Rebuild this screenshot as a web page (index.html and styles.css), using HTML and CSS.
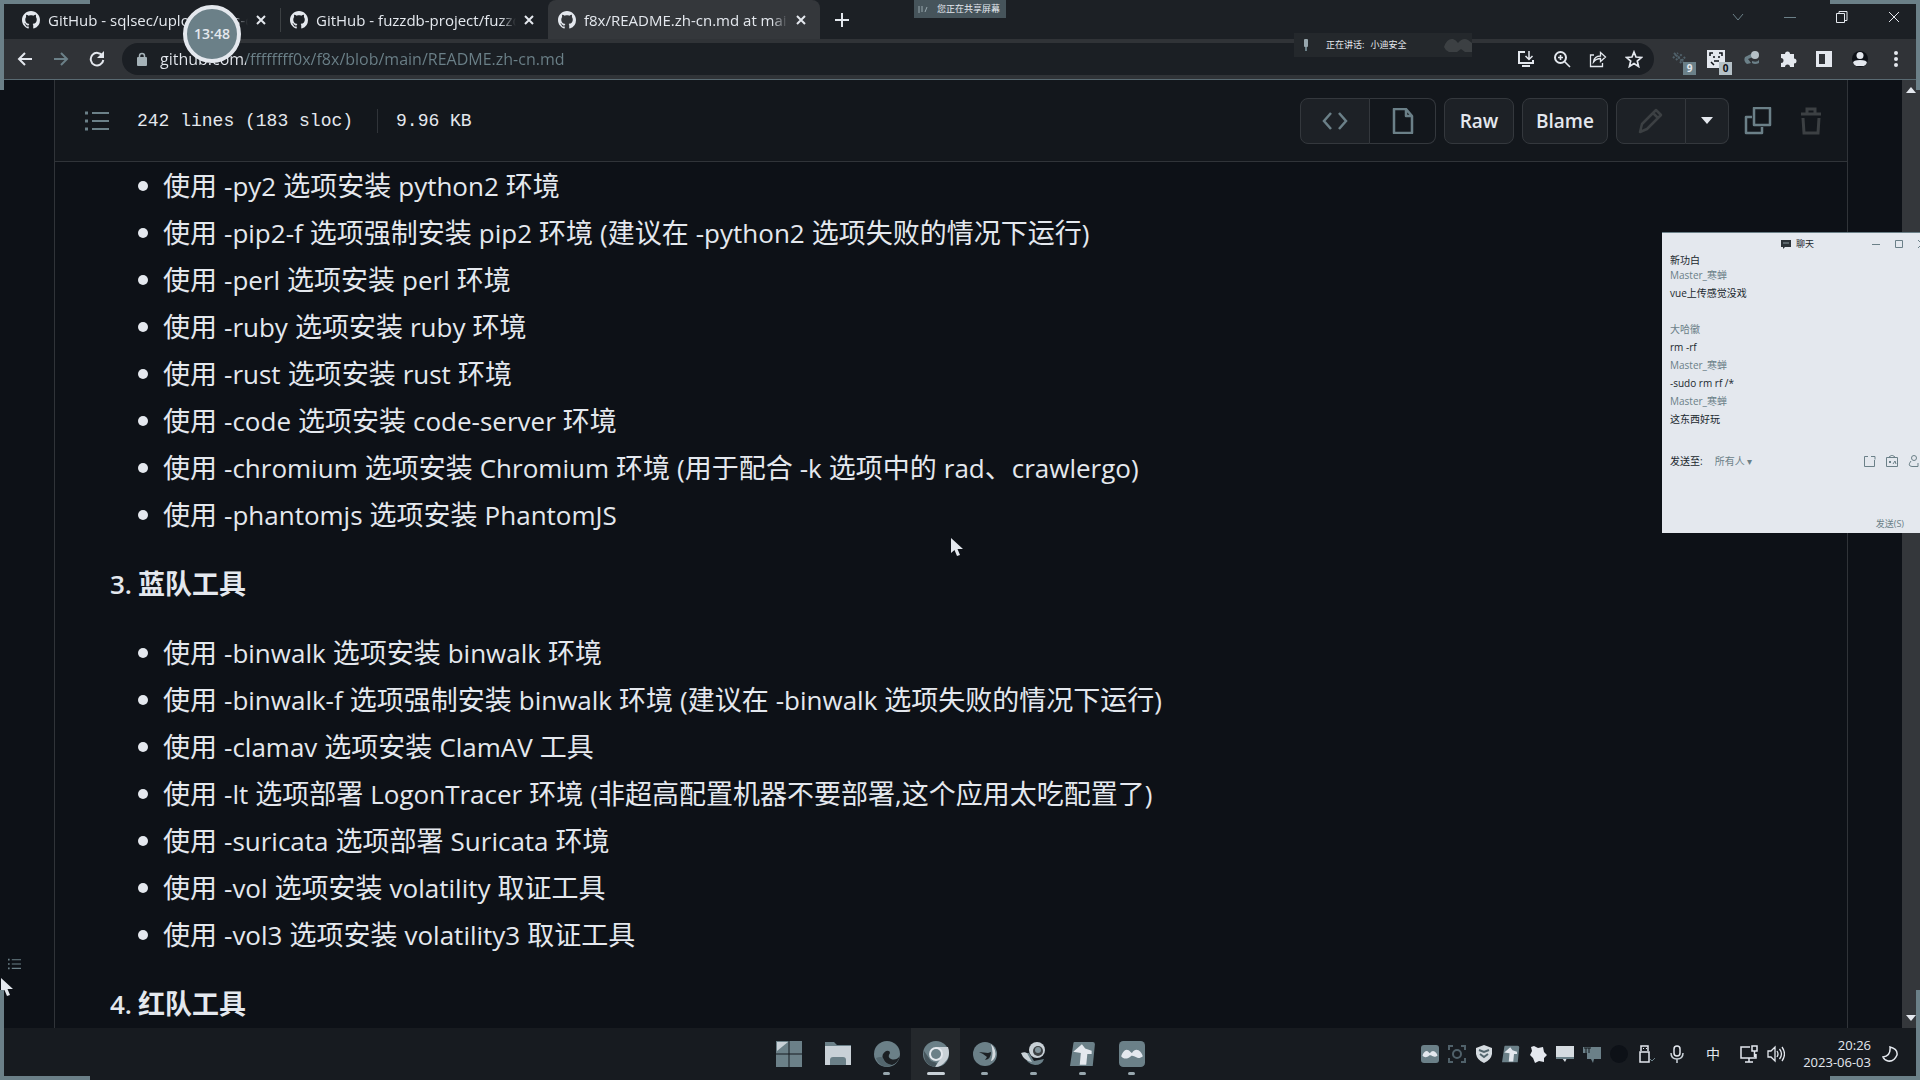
FILE: index.html
```html
<!DOCTYPE html>
<html lang="zh-CN">
<head>
<meta charset="utf-8">
<title>f8x/README.zh-cn.md at main</title>
<link rel="stylesheet" href="styles.css">
</head>
<body>
<svg class="sprite" aria-hidden="true">
  <symbol id="github" viewBox="0 0 16 16"><path fill="currentColor" d="M8 0C3.58 0 0 3.58 0 8c0 3.54 2.29 6.53 5.47 7.59.4.07.55-.17.55-.38 0-.19-.01-.82-.01-1.49-2.01.37-2.53-.49-2.69-.94-.09-.23-.48-.94-.82-1.13-.28-.15-.68-.52-.01-.53.63-.01 1.08.58 1.23.82.72 1.21 1.87.87 2.33.66.07-.52.28-.87.51-1.07-1.78-.2-3.64-.89-3.64-3.95 0-.87.31-1.59.82-2.15-.08-.2-.36-1.02.08-2.12 0 0 .67-.21 2.2.82.64-.18 1.32-.27 2-.27s1.36.09 2 .27c1.53-1.04 2.2-.82 2.2-.82.44 1.1.16 1.92.08 2.12.51.56.82 1.27.82 2.15 0 3.07-1.87 3.75-3.65 3.95.29.25.54.73.54 1.48 0 1.07-.01 1.93-.01 2.2 0 .21.15.46.55.38A8.01 8.01 0 0 0 16 8c0-4.42-3.58-8-8-8z"/></symbol>
  <symbol id="x" viewBox="0 0 10 10"><path d="M1 1l8 8M9 1l-8 8" stroke="currentColor" stroke-width="2" fill="none"/></symbol>
  <symbol id="list" viewBox="0 0 24 20"><path d="M7 2h17M7 10h17M7 18h17" stroke="currentColor" stroke-width="2"/><path d="M0 2h3M0 10h3M0 18h3" stroke="currentColor" stroke-width="3"/></symbol>
  <symbol id="pointer" viewBox="0 0 12 18"><path fill="#e4e8ee" d="M0 0v15l3.500-3 2.500 6 3-1-2.500-6H12z"/></symbol>
  <symbol id="wave" viewBox="0 0 24 24"><rect width="24" height="24" rx="4" fill="#6b8088"/><path d="M2 14c1-3 3-6 5-6 3 0 4 3 5 3 1-2 3-3 4-3 3 0 5 3 6 6-2 2-5 2-6 1-2-1-4-2-5-1-3 3-7 3-9 0z" fill="#e4e8ee"/></symbol>
  <symbol id="bird" viewBox="0 0 24 24"><path d="M4 1h17q2 0 2 2l-2 20H0L3 3q0-2 1-2z" fill="#6b8088"/><path d="M3 10l8-7 3 4 6 2v3h-4l-1 10H9l1-11z" fill="#e4e8ee"/></symbol>
</svg>

<header class="tabstrip">
  <nav class="tabs" aria-label="标签页">
    <div class="tab"><svg class="i18"><use href="#github"/></svg><span class="tab-title">GitHub - sqlsec/upload-labs-d</span><button class="bare" aria-label="关闭"><svg class="i10"><use href="#x"/></svg></button></div>
    <div class="tab divided"><svg class="i18"><use href="#github"/></svg><span class="tab-title">GitHub - fuzzdb-project/fuzzd</span><button class="bare" aria-label="关闭"><svg class="i10"><use href="#x"/></svg></button></div>
    <div class="tab active"><svg class="i18"><use href="#github"/></svg><span class="tab-title">f8x/README.zh-cn.md at main</span><button class="bare" aria-label="关闭"><svg class="i10"><use href="#x"/></svg></button></div>
    <button class="bare new-tab" aria-label="新标签页"><svg class="i14" viewBox="0 0 14 14"><path d="M7 0v14M0 7h14" stroke="currentColor" stroke-width="2"/></svg></button>
  </nav>
  <div class="window-buttons">
    <button class="bare dim" aria-label="搜索标签页"><svg class="i14" viewBox="0 0 14 14"><path d="M2 4l5 6 5-6" fill="none" stroke="currentColor"/></svg></button>
    <button class="bare dim" aria-label="最小化"><svg class="i14" viewBox="0 0 14 14"><path d="M1 7.500h12" stroke="currentColor"/></svg></button>
    <button class="bare" aria-label="还原"><svg class="i14" viewBox="0 0 14 14"><path d="M1.500 3.500h8v9h-8zM4 3.500V1.500h8v9H9.500" fill="none" stroke="currentColor"/></svg></button>
    <button class="bare" aria-label="关闭窗口"><svg class="i14" viewBox="0 0 14 14"><path d="M2 2l10 10M12 2L2 12" stroke="currentColor"/></svg></button>
  </div>
</header>

<div class="toolbar">
  <div class="nav-buttons">
    <button class="bare" aria-label="后退"><svg class="i16" viewBox="0 0 16 16"><path d="M15 8H2M8 2L2 8l6 6" fill="none" stroke="currentColor" stroke-width="2"/></svg></button>
    <button class="bare dim" aria-label="前进"><svg class="i16" viewBox="0 0 16 16"><path d="M1 8h13M8 2l6 6-6 6" fill="none" stroke="currentColor" stroke-width="2"/></svg></button>
    <button class="bare" aria-label="刷新"><svg class="i16" viewBox="0 0 16 16"><path d="M13.500 5A6.300 6.300 0 1 0 14.300 9" fill="none" stroke="currentColor" stroke-width="2"/><path d="M15 0v7H8z" fill="currentColor"/></svg></button>
  </div>
  <div class="omnibox">
    <svg class="lock" viewBox="0 0 10 14"><path d="M2.500 6V4a2.500 2.500 0 0 1 5 0v2" fill="none" stroke="currentColor" stroke-width="1.500"/><rect y="5" width="10" height="9" rx="1" fill="currentColor"/></svg>
    <input class="url" aria-label="地址" value="github.com/ffffffff0x/f8x/blob/main/README.zh-cn.md">
    <button class="bare" aria-label="安装"><svg class="i18" viewBox="0 0 18 18"><path d="M8 2H2v11h14v-3M5 16h8" fill="none" stroke="currentColor" stroke-width="2"/><path d="M12 1v8M8.500 6l3.500 3.500L15.500 6" fill="none" stroke="currentColor" stroke-width="1.500"/></svg></button>
    <button class="bare" aria-label="缩放"><svg class="i18" viewBox="0 0 18 18"><circle cx="7.500" cy="7.500" r="5.500" fill="none" stroke="currentColor" stroke-width="2"/><path d="M11.500 11.500L17 17M5 7.500h5M7.500 5v5" stroke="currentColor" stroke-width="1.600"/></svg></button>
    <button class="bare" aria-label="分享"><svg class="i18" viewBox="0 0 18 18"><path d="M5 5H1.500v11.500h12V13M4.500 12c.5-4 3-6 7-6V2.500L16.500 7l-5 4.500V8.500c-3 0-5 1-7 3.500z" fill="none" stroke="currentColor" stroke-width="1.300"/></svg></button>
    <button class="bare" aria-label="收藏"><svg class="i18" viewBox="0 0 18 18"><path d="M9 2l2 5 5.500.5-4.200 3.500 1.300 5.500L9 13.500l-4.600 3L5.700 11 1.500 7.500 7 7z" fill="none" stroke="currentColor" stroke-width="1.700"/></svg></button>
  </div>
  <div class="extensions">
    <button class="bare ext" aria-label="扩展 9"><svg class="i18" viewBox="0 0 18 18"><path d="M2 8l5-5M5 10l6-6M9 13l5-6M3 3l9 9" stroke="#50616a" stroke-width="2" stroke-dasharray="2 1"/></svg><span class="badge">9</span></button>
    <button class="bare ext" aria-label="扩展 0"><svg class="i18" viewBox="0 0 18 18"><rect width="18" height="18" fill="#e4e8ee"/><path d="M3 6V3h3M12 3h3v3M4 12l3 3M6 7h2M11 7h2M7 11h5" fill="none" stroke="#0d1117" stroke-width="1.500"/></svg><span class="badge light">0</span></button>
    <button class="bare" aria-label="扩展"><svg class="i18" viewBox="0 0 18 18"><path d="M8 4L2 7q-2 4 2 7l4-1-3-4 5-2" fill="#6b8088"/><circle cx="12" cy="5" r="4" fill="#b5c0c6"/><path d="M9 11q5 2 7-1v3q-4 2-7 0z" fill="#6b8088"/></svg></button>
    <button class="bare" aria-label="扩展程序"><svg class="i18" viewBox="0 0 18 18"><path fill="currentColor" d="M6 4a2.500 2.500 0 0 1 5 0h4v4.500a2.500 2.500 0 0 1 0 5V17h-4a2.500 2.500 0 0 0-5 0H2v-4a2.500 2.500 0 0 0 0-5V4z"/></svg></button>
    <button class="bare" aria-label="侧边栏"><svg class="i18" viewBox="0 0 18 18"><path fill="currentColor" fill-rule="evenodd" d="M1 1h16v16H1zM4 4v10h6V4z"/></svg></button>
    <button class="bare avatar" aria-label="用户"><svg class="i16" viewBox="0 0 16 16"><circle cx="8" cy="4.500" r="3.500" fill="currentColor"/><path d="M1 15v-3q0-3 7-3t7 3v3z" fill="currentColor"/></svg></button>
    <button class="bare" aria-label="菜单"><svg class="i18" viewBox="0 0 18 18"><circle cx="9" cy="3" r="2" fill="currentColor"/><circle cx="9" cy="9" r="2" fill="currentColor"/><circle cx="9" cy="15" r="2" fill="currentColor"/></svg></button>
  </div>
</div>

<div class="viewport">
  <aside class="gutter"><svg class="outline-icon"><use href="#list"/></svg></aside>
  <main class="file">
    <div class="file-header">
      <svg class="toc"><use href="#list"/></svg>
      <span class="meta">242 lines (183 sloc)</span><span class="meta size">9.96 KB</span>
      <div class="actions">
        <div class="group">
          <button class="btn on" aria-label="源代码"><svg class="i26" viewBox="0 0 26 26"><path d="M9 5L2 13l7 8M17 5l7 8-7 8" fill="none" stroke="currentColor" stroke-width="2.500"/></svg></button>
          <button class="btn flat" aria-label="预览"><svg class="i26" viewBox="0 0 26 26"><path d="M4 1h12l6 7v17H4zM16 1v7h6" fill="none" stroke="currentColor" stroke-width="2.500" stroke-linejoin="round"/></svg></button>
        </div>
        <button class="btn text">Raw</button>
        <button class="btn text blame">Blame</button>
        <div class="group">
          <button class="btn faint" aria-label="编辑"><svg class="i26" viewBox="0 0 26 26"><path d="M2 24l2-8L18 2l5 5L9 21zM15 5l5 5" fill="none" stroke="currentColor" stroke-width="2.500" stroke-linejoin="round"/></svg></button>
          <button class="btn caret" aria-label="更多"><svg class="i12" viewBox="0 0 12 12"><path d="M0 2h12L6 9z" fill="currentColor"/></svg></button>
        </div>
        <button class="bare copy" aria-label="复制"><svg class="i28" viewBox="0 0 28 28"><path d="M10 1h16v17H10zM8 10H2v16h16v-6" fill="none" stroke="currentColor" stroke-width="2.500" stroke-linejoin="round"/></svg></button>
        <button class="bare trash" aria-label="删除"><svg class="i28" viewBox="0 0 28 28"><path d="M4 7h20M10 7V2h8v5M6 11l1 15h14l1-15" fill="none" stroke="currentColor" stroke-width="3"/></svg></button>
      </div>
    </div>
    <article class="readme">
      <ul>
        <li>使用 <span>-py2</span> 选项安装 <span>python2</span> 环境</li>
        <li>使用 <span>-pip2-f</span> 选项强制安装 <span>pip2</span> 环境 <span>(</span>建议在 <span>-python2</span> 选项失败的情况下运行<span>)</span></li>
        <li>使用 <span>-perl</span> 选项安装 <span>perl</span> 环境</li>
        <li>使用 <span>-ruby</span> 选项安装 <span>ruby</span> 环境</li>
        <li>使用 <span>-rust</span> 选项安装 <span>rust</span> 环境</li>
        <li>使用 <span>-code</span> 选项安装 <span>code-server</span> 环境</li>
        <li>使用 <span>-chromium</span> 选项安装 <span>Chromium</span> 环境 <span>(</span>用于配合 <span>-k</span> 选项中的 <span>rad</span>、<span>crawlergo)</span></li>
        <li>使用 <span>-phantomjs</span> 选项安装 <span>PhantomJS</span></li>
      </ul>
      <h3><span class="num">3.</span>蓝队工具</h3>
      <ul>
        <li>使用 <span>-binwalk</span> 选项安装 <span>binwalk</span> 环境</li>
        <li>使用 <span>-binwalk-f</span> 选项强制安装 <span>binwalk</span> 环境 <span>(</span>建议在 <span>-binwalk</span> 选项失败的情况下运行<span>)</span></li>
        <li>使用 <span>-clamav</span> 选项安装 <span>ClamAV</span> 工具</li>
        <li>使用 <span>-lt</span> 选项部署 <span>LogonTracer</span> 环境 <span>(</span>非超高配置机器不要部署<span>,</span>这个应用太吃配置了<span>)</span></li>
        <li>使用 <span>-suricata</span> 选项部署 <span>Suricata</span> 环境</li>
        <li>使用 <span>-vol</span> 选项安装 <span>volatility</span> 取证工具</li>
        <li>使用 <span>-vol3</span> 选项安装 <span>volatility3</span> 取证工具</li>
      </ul>
      <h3><span class="num">4.</span>红队工具</h3>
    </article>
  </main>
  <div class="scrollbar"><svg class="i10" viewBox="0 0 10 10"><path d="M0 8l5-6 5 6z" fill="currentColor"/></svg><svg class="i10" viewBox="0 0 10 10"><path d="M0 2l5 6 5-6z" fill="currentColor"/></svg></div>
</div>

<footer class="taskbar">
  <div class="apps">
    <button class="app" aria-label="开始"><svg class="i26" viewBox="0 0 26 26"><path d="M0 0h12.500v12.500H0zM13.500 0H26v12.500H13.500zM0 13.500h12.500V26H0zM13.500 13.500H26V26H13.500z" fill="#6b8088"/><path d="M1 1h11L1 10z" fill="#c9d1d7"/></svg></button>
    <button class="app" aria-label="文件资源管理器"><svg class="i26" viewBox="0 0 26 26"><path d="M0 1h9l3 3h14v10H0z" fill="#6b8088"/><path d="M0 5h26v19H0z" fill="#c9d1d7"/><path d="M5 24v-5q0-3 3-3h10q3 0 3 3v5z" fill="#6b8088"/></svg></button>
    <button class="app open" aria-label="Edge"><svg class="i26" viewBox="0 0 26 26"><circle cx="13" cy="13" r="13" fill="#6b8088"/><path d="M26 15q-4 5-9 3-4-2-1-6 0-3-4-2-5 3-3 8 3 6 9 6 6-2 8-9z" fill="#1c2024"/><path d="M2 17q7-3 8 2 2 4 8 5-4 3-9 1-5-2-7-8z" fill="#53666e"/></svg></button>
    <button class="app open current" aria-label="Chrome"><svg class="i26" viewBox="0 0 26 26"><circle cx="13" cy="13" r="13" fill="#6b8088"/><path d="M13 6h12q3 9-3 15-4 5-10 5l6-9z" fill="#c9d1d7"/><path d="M1 10l7 10 6 2-2 4Q0 24 1 10z" fill="#46555c"/><circle cx="13" cy="13" r="7" fill="#e4e8ee"/><circle cx="13" cy="13" r="5" fill="#6b8088"/></svg></button>
    <button class="app open" aria-label="浏览器"><svg class="i26" viewBox="0 0 26 26"><circle cx="13" cy="13" r="12" fill="#6b8088"/><path d="M19 3q6 6 4 13-2 4-4 4 3-8 0-17z" fill="#d5dbe0"/><path d="M7 11l9 1 3-1q0 7-6 8l2-3-4-3z" fill="#1c2024"/></svg></button>
    <button class="app open" aria-label="工具"><svg class="i26" viewBox="0 0 26 26"><path d="M2 12h6l5 8 10-2q-2 6-9 6Q5 23 2 12z" fill="#6b8088"/><path d="M0 12q6-2 7 2l4 7Q3 20 0 12z" fill="#c9d1d7"/><circle cx="16" cy="9" r="8" fill="#c9d1d7"/><circle cx="17" cy="10" r="5" fill="#3c4043"/><circle cx="17" cy="9" r="3" fill="#82949c"/></svg></button>
    <button class="app open" aria-label="Typora"><svg class="i26"><use href="#bird"/></svg></button>
    <button class="app open" aria-label="腾讯会议"><svg class="i26"><use href="#wave"/></svg></button>
  </div>
  <div class="tray">
    <svg class="i18" viewBox="0 0 24 24"><use href="#wave"/></svg>
    <svg class="i18 dim" viewBox="0 0 18 18"><path d="M1 5V1h4M13 1h4v4M17 13v4h-4M5 17H1v-4" fill="none" stroke="#50616a" stroke-width="2"/><circle cx="9" cy="9" r="4" fill="none" stroke="#50616a" stroke-width="2"/></svg>
    <svg class="i18" viewBox="0 0 18 18"><path d="M9 0l8 3v6q-1 6-8 9-7-3-8-9V3z" fill="#d5dbe0"/><path d="M4 5l5 2 5-2M5 9l4 3 4-3" fill="none" stroke="#53666e" stroke-width="2"/></svg>
    <svg class="i18" viewBox="0 0 24 24"><use href="#bird"/></svg>
    <svg class="i18" viewBox="0 0 18 18"><path d="M5 1l4 2 5-1 1 5 3 3-3 3v4l-5-1-4 2-2-5-3-3 2-4-1-4z" fill="#e4e8ee"/></svg>
    <svg class="i18" viewBox="0 0 18 18"><path d="M0 1h18v12H11l-2 4-3-4H0z" fill="#d5dbe0"/><path d="M0 13h18" stroke="#6b8088" stroke-width="2"/></svg>
    <svg class="i18" viewBox="0 0 18 18"><path d="M0 2h18v12H11l-1 4-2-4H4V8H0z" fill="#6b8088"/><path d="M1 3h7M3 3v5M6 3v5" stroke="#15191d"/></svg>
    <svg class="i18" viewBox="0 0 18 18"><circle cx="9" cy="9" r="9" fill="#0d1117"/></svg>
    <svg class="i18" viewBox="0 0 18 18"><path d="M4 6V1h7v5M3 7h9v10H3z" fill="none" stroke="#e4e8ee" stroke-width="1.500"/><path d="M6 3.500h1M9 3.500h1" stroke="#e4e8ee"/><path d="M13 14l2 2 3-3" fill="none" stroke="#6b8088"/></svg>
    <svg class="i18 mic" viewBox="0 0 18 18"><rect x="6" y="1" width="6" height="10" rx="3" fill="none" stroke="#e4e8ee" stroke-width="1.500"/><path d="M3 8q0 6 6 6t6-6M9 14v4" fill="none" stroke="#c9d1d7" stroke-width="1.500"/></svg>
    <span class="ime">中</span>
    <svg class="i18 net" viewBox="0 0 18 18"><path d="M10 2H1v11h15V9M5 17h8M9 13v4M12 1h5v5h-5zM14.500 6v6" fill="none" stroke="#e4e8ee" stroke-width="1.500"/></svg>
    <svg class="i18" viewBox="0 0 18 18"><path d="M1 6h3l4-4v14l-4-4H1zM10 6q2 3 0 6M12.500 4q4 5 0 10M15 2q5 7 0 14" fill="none" stroke="#e4e8ee" stroke-width="1.300"/></svg>
    <time class="clock">20:26<br>2023-06-03</time>
    <svg class="i16" viewBox="0 0 16 16"><path d="M8 1q8 2 7 8-3 7-9 6-4-1-5-4 8-1 7-10z" fill="none" stroke="#e4e8ee" stroke-width="1.500"/></svg>
  </div>
</footer>

<section class="chat" aria-label="聊天">
  <div class="chat-title"><span class="chat-name"><svg class="i10" viewBox="0 0 10 10"><path d="M0 1h10v7H4L2 10V8H0z" fill="#2b3238"/><path d="M2 4h6" stroke="#8b999f"/></svg>聊天</span>
    <span class="chat-buttons"><svg class="i10" viewBox="0 0 10 10"><path d="M1 5.500h8" stroke="currentColor"/></svg><svg class="i10" viewBox="0 0 10 10"><path d="M1.500 1.500h7v7h-7z" fill="none" stroke="currentColor"/></svg><svg class="i10" viewBox="0 0 10 10"><path d="M1 1l8 8M9 1L1 9" stroke="currentColor"/></svg></span></div>
  <div class="messages">
    <p class="cut">新功白</p>
    <p class="who">Master_寒蝉</p>
    <p>vue上传感觉没戏</p>
    <p class="who later">大哈徽</p>
    <p>rm -rf</p>
    <p class="who">Master_寒蝉</p>
    <p>-sudo rm rf /*</p>
    <p class="who">Master_寒蝉</p>
    <p>这东西好玩</p>
  </div>
  <div class="send-to"><label for="to">发送至:</label><select id="to"><option>所有人 ▾</option></select>
    <span class="chat-tools"><svg class="i12" viewBox="0 0 12 12"><path d="M4 1.500H.5v10h10V5M7 1.500h4v3" fill="none" stroke="currentColor"/></svg><svg class="i12" viewBox="0 0 12 12"><path d="M.5 2.500h11v9H.5zM3 2l3-2 3 2M3 6l2 2M5 6L3 8M7 9l2-3 1 3" fill="none" stroke="currentColor"/></svg><svg class="i12" viewBox="0 0 12 12"><circle cx="6" cy="3" r="2.500" fill="none" stroke="currentColor"/><path d="M3 6q-4 5 1 5.500h6V8" fill="none" stroke="currentColor"/></svg></span></div>
  <textarea aria-label="消息"></textarea>
  <button class="send">发送(S)</button>
</section>

<div class="sharing"><svg class="i10" viewBox="0 0 10 10"><path d="M1 2v7M4 2v6M7 8l2-5" stroke="#98a7ae"/></svg>您正在共享屏幕</div>
<div class="speaking"><svg class="i12" viewBox="0 0 12 12"><rect x="4" width="4" height="8" rx="1" fill="#98a7ae"/><path d="M6 8v4" stroke="#6b8088" stroke-width="2"/></svg><span>正在讲话:</span><span class="speaker">小迪安全</span><svg class="cloud" viewBox="0 0 28 14"><path d="M0 9q3-9 9-8 3 1 5 4 5-6 10-3l4 3v9h-7l-4-3-4 3H5q-4-2-5-5z" fill="#3c4043"/></svg></div>
<div class="timer">13:48</div>
<svg class="pointer center"><use href="#pointer"/></svg>
<svg class="pointer edge"><use href="#pointer"/></svg>
<i class="corner tl"></i><i class="corner tr"></i><i class="corner bl"></i><i class="corner br"></i>
</body>
</html>
```
FILE: styles.css
```css
:root {
  --bg: #0d1117;
  --line: #303439;
  --fg: #e4e8ee;
  --dim: #6b8088;
}
* { box-sizing: border-box; }
body {
  margin: 0;
  height: 100vh;
  display: flex;
  flex-direction: column;
  overflow: hidden;
  position: relative;
  background: var(--bg);
  color: var(--fg);
  font: 15px/20px "Open Sans", "Noto Sans CJK SC", sans-serif;
}
button, input, select, textarea { font: inherit; color: inherit; margin: 0; padding: 0; border: 0; background: none; }
svg { display: block; flex: none; }
.sprite { position: absolute; width: 0; height: 0; }
.i10 { width: 10px; height: 10px; }
.i12 { width: 12px; height: 12px; }
.i14 { width: 14px; height: 14px; }
.i16 { width: 16px; height: 16px; }
.i18 { width: 18px; height: 18px; }
.i26 { width: 26px; height: 26px; }
.i28 { width: 28px; height: 28px; }
.bare { display: flex; align-items: center; justify-content: center; }
.dim { color: var(--dim); }

/* tab strip */
.tabstrip { height: 39px; flex: none; display: flex; justify-content: space-between; background: #1c2025; padding-left: 12px; }
.tabs { display: flex; }
.tab { width: 268px; display: flex; align-items: center; gap: 8px; padding: 0 14px 0 10px; }
.tab.divided { background: linear-gradient(#3c4043, #3c4043) 0 8px / 1px 24px no-repeat; }
.tab.active { width: 272px; background: #34373b; border-radius: 8px 8px 0 0; }
.tab-title { flex: 1; min-width: 0; overflow: hidden; white-space: nowrap; mask-image: linear-gradient(90deg, #000 92%, transparent); }
.new-tab { width: 44px; }
.window-buttons { display: flex; align-items: flex-start; }
.window-buttons .bare { width: 52px; height: 33px; }

/* address bar */
.toolbar { height: 41px; flex: none; display: flex; align-items: center; background: #303337; border-bottom: 1px solid #596a72; padding-bottom: 1px; }
.nav-buttons { display: flex; padding-left: 7px; width: 122px; }
.nav-buttons .bare { width: 36px; }
.omnibox { flex: 1; display: flex; align-items: center; height: 32px; padding: 0 2px 0 15px; border-radius: 16px; background: #1b1f24; }
.lock { width: 10px; height: 14px; color: #a5b2b8; margin-right: 13px; }
.url {
  flex: 1;
  font-size: 16px;
  background: linear-gradient(90deg, var(--fg) 86px, var(--dim) 86px);
  background-clip: text;
  -webkit-text-fill-color: transparent;
}
.omnibox .bare { width: 36px; }
.extensions { display: flex; padding: 0 6px 0 8px; }
.extensions .bare { width: 36px; height: 32px; }
.ext { position: relative; }
.badge { position: absolute; right: 2px; bottom: 0; width: 13px; height: 13px; background: var(--dim); font: bold 10px/13px "Open Sans", sans-serif; }
.badge.light { background: #b5c0c6; color: var(--bg); }
.avatar svg { background: var(--bg); border-radius: 8px; }

/* page */
.viewport { flex: 1; min-height: 0; display: flex; }
.gutter { width: 54px; display: flex; align-items: flex-end; padding: 0 0 58px 8px; }
.outline-icon { width: 13px; height: 12px; color: var(--dim); }
.file { flex: 1; min-width: 0; overflow: hidden; border: solid var(--line); border-width: 0 1px; margin-right: 54px; }
.file-header { height: 82px; display: flex; align-items: center; padding: 0 12px 0 30px; background: #13171c; border-bottom: 1px solid var(--line); }
.toc { width: 24px; height: 20px; color: var(--dim); margin-right: 28px; }
.meta { font: 18px/24px "Liberation Mono", monospace; }
.size { border-left: 1px solid var(--line); margin-left: 24px; padding-left: 18px; }
.actions { margin-left: auto; display: flex; align-items: center; gap: 8px; }
.group { display: flex; }
.btn { height: 46px; width: 70px; display: flex; align-items: center; justify-content: center; border: 1px solid #34383d; border-radius: 8px; background: #1d2126; font-size: 19px; font-weight: 600; }
.group .btn:first-child { border-radius: 8px 0 0 8px; }
.group .btn:last-child { border-radius: 0 8px 8px 0; border-left: 0; }
.btn.on { color: var(--dim); }
.btn.flat { background: none; color: var(--dim); width: 66px; }
.btn.blame { width: 86px; }
.btn.faint { color: #3c4043; }
.btn.caret { width: 43px; }
.copy { color: var(--dim); width: 42px; }
.trash { color: #3c4043; width: 48px; }
.scrollbar { width: 18px; background: #34373b; display: flex; flex-direction: column; align-items: center; justify-content: space-between; padding: 5px 0; }

/* readme */
.readme { padding: 4px 0 0 55px; font-size: 27px; line-height: 40px; }
.readme ul { list-style: none; margin: 0; padding: 0 0 0 53px; }
.readme li { position: relative; white-space: nowrap; }
.readme li + li { margin-top: 7px; }
.readme li::before { content: ""; position: absolute; left: -25px; top: 15px; width: 10px; height: 10px; border-radius: 5px; background: var(--fg); }
.readme li span { font-size: 26px; }
.readme h3 { display: flex; margin: 29px 0; font-size: 27px; font-weight: 700; }
.num { width: 28px; font-size: 26px; font-weight: 600; }

/* taskbar */
.taskbar { height: 52px; flex: none; display: grid; grid-template-columns: 1fr auto 1fr; align-items: stretch; background: #171b20; }
.apps { grid-column: 2; display: flex; }
.app { width: 49px; display: flex; justify-content: center; align-items: center; position: relative; }
.app.current { background: #24282c; }
.app.open::after { content: ""; position: absolute; bottom: 5px; width: 7px; height: 3px; border-radius: 2px; background: #98a7ae; }
.app.current::after { width: 18px; background: #c9d1d7; }
.tray { display: flex; align-items: center; justify-content: flex-end; gap: 9px; padding-right: 22px; }
.mic { margin: 0 9px 0 4px; }
.ime { width: 18px; text-align: center; font-size: 14px; margin-right: 9px; }
.clock { width: 72px; text-align: right; font-size: 13px; line-height: 17px; margin: 0 2px 0 5px; white-space: nowrap; }

/* meeting chat window */
.chat { position: absolute; left: 1662px; right: 0; top: 232px; height: 301px; overflow: hidden; display: flex; flex-direction: column; background: #e4e8ee; border-top: 1px solid var(--dim); color: #20272d; font-size: 10px; line-height: 18px; padding-left: 8px; }
.chat-title { display: flex; height: 22px; flex: none; align-items: center; font-size: 9px; white-space: nowrap; }
.chat-name { display: flex; align-items: center; gap: 5px; margin-left: 111px; }
.chat-buttons { display: flex; gap: 13px; margin-left: 57px; color: var(--dim); }
.messages { height: 196px; flex: none; }
.messages p { margin: 0; height: 18px; }
.messages .cut { height: 11px; padding-top: 2px; display: flex; flex-direction: column; justify-content: flex-end; overflow: hidden; line-height: 12px; }
.messages .who { color: var(--dim); }
.messages .later { margin-top: 18px; }
.send-to { display: flex; align-items: center; height: 20px; flex: none; }
.send-to select { appearance: none; width: 50px; color: var(--dim); margin-left: 12px; }
.chat-tools { display: flex; gap: 10px; margin-left: auto; color: var(--dim); }
.chat textarea { flex: 1; min-height: 0; resize: none; }
.send { align-self: flex-end; margin-right: 16px; height: 18px; color: var(--dim); flex: none; font-size: 9px; }

/* overlays of the meeting client */
.sharing { position: absolute; left: 914px; top: 0; width: 92px; height: 18px; display: flex; align-items: center; gap: 9px; padding-left: 4px; background: #46545b; font-size: 9px; white-space: nowrap; }
.speaking { position: absolute; left: 1294px; top: 33px; width: 178px; height: 24px; display: flex; align-items: center; padding-left: 6px; background: #24282c; font-size: 9px; white-space: nowrap; }
.speaking span { margin-left: 14px; }
.speaking .speaker { margin-left: 6px; }
.cloud { width: 28px; height: 14px; margin-left: auto; }
.timer { position: absolute; left: 183px; top: 5px; width: 58px; height: 58px; border: 4px solid var(--fg); border-radius: 50%; background: var(--dim); text-align: center; line-height: 50px; font-size: 14px; font-weight: 600; }
.pointer { position: absolute; width: 12px; height: 18px; }
.center { left: 951px; top: 538px; }
.edge { left: 1px; top: 978px; }
.corner { position: absolute; width: 90px; height: 90px; border: 0 solid var(--dim); pointer-events: none; }
.tl { left: 0; top: 0; border-width: 4px 0 0 4px; }
.tr { right: 0; top: 0; border-width: 4px 4px 0 0; }
.bl { left: 0; bottom: 0; border-width: 0 0 4px 4px; }
.br { right: 0; bottom: 0; border-width: 0 4px 4px 0; }
```
